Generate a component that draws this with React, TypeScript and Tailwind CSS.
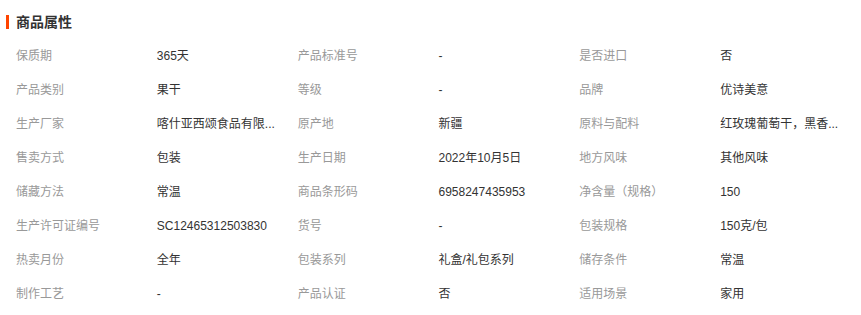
import React from 'react';

type Attr = { label: string; value: string };

// values are shown already shortened, as the page does
const attrs: Attr[] = [
    { label: '保质期', value: '365天' },
    { label: '产品标准号', value: '-' },
    { label: '是否进口', value: '否' },
    { label: '产品类别', value: '果干' },
    { label: '等级', value: '-' },
    { label: '品牌', value: '优诗美意' },
    { label: '生产厂家', value: '喀什亚西颂食品有限...' },
    { label: '原产地', value: '新疆' },
    { label: '原料与配料', value: '红玫瑰葡萄干，黑香...' },
    { label: '售卖方式', value: '包装' },
    { label: '生产日期', value: '2022年10月5日' },
    { label: '地方风味', value: '其他风味' },
    { label: '储藏方法', value: '常温' },
    { label: '商品条形码', value: '6958247435953' },
    { label: '净含量（规格）', value: '150' },
    { label: '生产许可证编号', value: 'SC12465312503830' },
    { label: '货号', value: '-' },
    { label: '包装规格', value: '150克/包' },
    { label: '热卖月份', value: '全年' },
    { label: '包装系列', value: '礼盒/礼包系列' },
    { label: '储存条件', value: '常温' },
    { label: '制作工艺', value: '-' },
    { label: '产品认证', value: '否' },
    { label: '适用场景', value: '家用' },
];

const App: React.FC = () => {
    return (
        <div className="w-[861px] h-[315px] bg-white font-['Liberation_Sans','Noto_Sans_CJK_SC',sans-serif] overflow-hidden">
            {/* Title */}
            <div className="h-[39px] pt-[12px] pl-[6px] flex items-start">
                <div className="flex items-center h-5">
                    <span className="w-[3px] h-[14px] bg-[#ff4400]" />
                    <h2 className="ml-[7px] text-[14px] leading-5 font-bold text-[#333]">商品属性</h2>
                </div>
            </div>

            {/* Attribute grid */}
            <div className="grid grid-cols-6 pl-4">
                {attrs.map((a, idx) => (
                    <React.Fragment key={idx}>
                        <div className="h-[34px] flex items-center text-[12px] text-[#999] whitespace-nowrap">
                            {a.label}
                        </div>
                        <div className="h-[34px] flex items-center text-[12px] text-[#333] whitespace-nowrap">
                            {a.value}
                        </div>
                    </React.Fragment>
                ))}
            </div>
        </div>
    );
};

export default App;
